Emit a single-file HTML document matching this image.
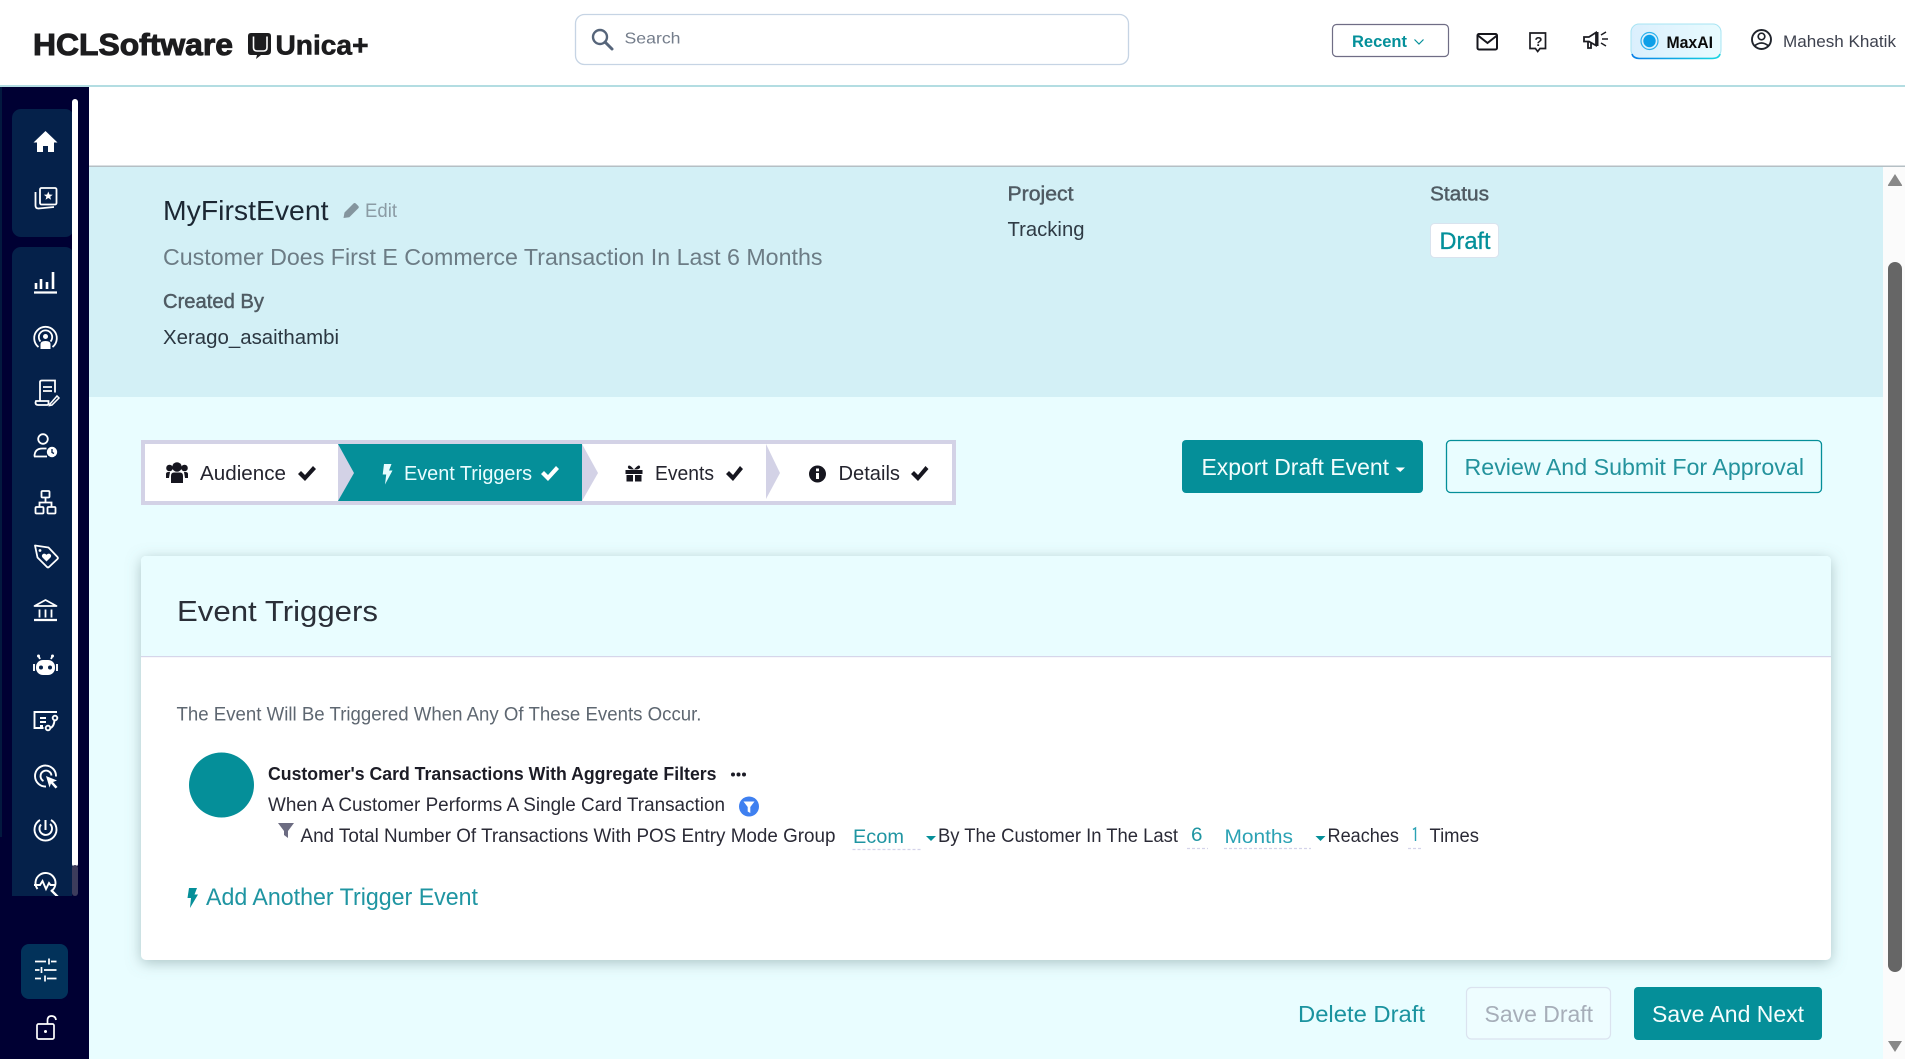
<!DOCTYPE html>
<html lang="en"><head><meta charset="utf-8"><title>MyFirstEvent</title>
<style>
html,body{margin:0;padding:0;width:1905px;height:1059px;overflow:hidden;background:#e9fdff}
svg{display:block}
text{font-family:"Liberation Sans",sans-serif;white-space:pre}
.b{font-weight:700}
</style></head><body>
<svg xmlns="http://www.w3.org/2000/svg" width="1905" height="1059" viewBox="0 0 1905 1059">
<defs>
<filter id="sh" x="-5%" y="-10%" width="110%" height="125%"><feDropShadow dx="0" dy="3" stdDeviation="7" flood-color="#6d8a8c" flood-opacity=".5"/></filter>
<linearGradient id="mx" x1="0" x2="1" y1="0" y2="0"><stop offset="0" stop-color="#dbeffd"/><stop offset="1" stop-color="#e8fbfe"/></linearGradient>
<linearGradient id="mb" x1="0" x2="1" y1="0" y2="0"><stop offset="0" stop-color="#0a7fe8"/><stop offset="1" stop-color="#16d6e0"/></linearGradient>
<clipPath id="navclip"><rect x="12" y="247" width="60" height="649"/></clipPath>
</defs>
<rect width="1905" height="1059" fill="#e9fdff"/>

<!-- header -->
<rect width="1905" height="85" fill="#fff"/>
<rect y="85" width="1905" height="2" fill="#b3dde2"/>
<text x="33" y="55" font-size="31" class="b" fill="#1c1c1e" stroke="#1c1c1e" stroke-width="1" textLength="200" lengthAdjust="spacingAndGlyphs">HCLSoftware</text>
<path d="M251 33h17q3 0 3 3v15q0 4-4 4h-6l-5 4 1-4h-6q-3 0-3-3V36q0-3 3-3z" fill="#1c1c1e"/>
<path d="M253.500 36.500v11q0 3.500 3.500 3.500h6.500q3.500 0 3.500-3.500v-11" fill="none" stroke="#fff" stroke-width="1.600"/>
<text x="275.500" y="54.500" font-size="28" class="b" fill="#1c1c1e" stroke="#1c1c1e" stroke-width=".6" textLength="93" lengthAdjust="spacingAndGlyphs">Unica+</text>
<rect x="575.500" y="14.500" width="553" height="50" rx="9" fill="#fff" stroke="#c6d4e4" stroke-width="1.300"/>
<circle cx="600" cy="37" r="7" fill="none" stroke="#56657a" stroke-width="2.400"/><path d="M605 42l7 7" stroke="#56657a" stroke-width="3" stroke-linecap="round"/>
<text x="624.500" y="43.500" font-size="16" fill="#747d8b" textLength="56" lengthAdjust="spacingAndGlyphs">Search</text>
<rect x="1332.500" y="24.500" width="116" height="32" rx="4" fill="#fff" stroke="#6f6d85" stroke-width="1.200"/>
<text x="1352" y="47" font-size="17" class="b" fill="#04909a" textLength="55" lengthAdjust="spacingAndGlyphs">Recent</text>
<path d="M1414.500 39.500l4.500 4.500 4.500-4.500" fill="none" stroke="#04909a" stroke-width="1.200"/>
<rect x="1477.500" y="34" width="19.500" height="15.500" rx="1.500" fill="none" stroke="#16161c" stroke-width="2"/><path d="M1478 35.500l9.500 7.500 9.500-7.500" fill="none" stroke="#16161c" stroke-width="2"/>
<path d="M1530 33h15.500v15.500h-5.500l-2.300 3-2.300-3H1530z" fill="none" stroke="#1c1c22" stroke-width="1.700"/>
<text x="1534.500" y="46" font-size="13" class="b" fill="#1c1c22">?</text>
<path d="M1584 37h5l7-4.500v13l-7-4h-5zM1588 42v6h3v-6" fill="none" stroke="#1c1c22" stroke-width="1.800"/><rect x="1596" y="32" width="2.500" height="14" fill="#1c1c22"/>
<path d="M1602 39h6M1601 35l5-3M1601 43l5 3" stroke="#1c1c22" stroke-width="1.500"/>
<rect x="1631" y="24" width="90" height="34" rx="8" fill="url(#mx)" stroke="#a7e4f3"/>
<path d="M1632 54q1 4 7 4.500h73q7 0 8-4.500" fill="none" stroke="url(#mb)" stroke-width="1.600"/>
<circle cx="1649.500" cy="41" r="8.500" fill="none" stroke="#2cb1ec" stroke-width="1.200"/><circle cx="1649.500" cy="41" r="6.200" fill="#0e9fe8"/>
<text x="1666.500" y="48" font-size="17" class="b" fill="#0a0a0a" textLength="46.500" lengthAdjust="spacingAndGlyphs">MaxAI</text>
<circle cx="1761.500" cy="39.500" r="9.500" fill="none" stroke="#20242c" stroke-width="1.900"/><circle cx="1761.500" cy="36.500" r="3.300" fill="none" stroke="#20242c" stroke-width="1.700"/><path d="M1754.500 46q7-6 14 0" fill="none" stroke="#20242c" stroke-width="1.800"/>
<text x="1783" y="47" font-size="16.500" fill="#3e424f" textLength="113" lengthAdjust="spacingAndGlyphs">Mahesh Khatik</text>

<!-- top blank -->
<rect x="89" y="87" width="1816" height="79" fill="#fff"/>
<rect x="89" y="165.500" width="1816" height="1.500" fill="#b5bfc4"/>

<!-- sidebar -->
<rect y="87" width="89" height="972" fill="#000033"/>
<rect y="87" width="2" height="750" fill="#03193f"/>
<rect x="12" y="109" width="62" height="128" rx="9" fill="#05214a"/>
<rect x="72" y="109" width="2" height="128" fill="#05214a"/>
<rect x="12" y="247" width="62" height="649" rx="9" fill="#05214a"/>
<rect x="12" y="270" width="60" height="626" fill="#05214a"/>
<rect x="72" y="99" width="6" height="768" rx="3" fill="#fff"/>
<rect x="72" y="865" width="6" height="31" rx="3" fill="#3c3c5c"/>

<g fill="none" stroke="#fff" stroke-width="1.800">
<path d="M45.500 131L33.500 142.500h3.500V152h6v-6h5v6h6v-9.500h3.500z" fill="#fff" stroke="none"/>
<rect x="40" y="188" width="16.500" height="16.500" rx="1.500"/><path d="M35.500 192v13.500q0 3 3 3L54 207" /><path d="M48.300 191.500l1.200 3 3.200.2-2.500 2 .9 3-2.800-1.700-2.800 1.700.9-3-2.500-2 3.200-.2z" fill="#fff" stroke="none"/>
<path d="M34 292.500h23" stroke-width="2.200"/><path d="M36 289v-6M41 289v-10M47 289v-7M53 289v-17" stroke-width="2.600"/>
<path d="M38.500 347a11.300 11.300 0 1 1 14 0" /><path d="M40.500 341.500a6.700 6.700 0 1 1 10 0"/><circle cx="45.500" cy="336.500" r="2.500" fill="#fff" stroke="none"/><path d="M40.500 349v-5q0-3 5-3t5 3v5z" fill="#fff" stroke="none"/>
<path d="M40 401v-19q0-1.500 2-1.500h13v12M36 401h12.500v2.500q0 1.500-1.500 1.500H38q-2.500 0-2.500-2.500z"/><path d="M43 387h9M43 391h9" /><path d="M50 404l7-8 2 2-7 7-2.500 .5z" stroke-width="1.500"/>
<circle cx="43" cy="439" r="4.800"/><path d="M34.500 456.500q0-8 8-8h4"/><path d="M34 456.500h13"/><circle cx="52" cy="452" r="5.200" fill="#fff" stroke="none"/><path d="M52 449v3.500l2 1" stroke="#05214a" stroke-width="1.300"/>
<rect x="41.500" y="491" width="8" height="6.500" rx="1"/><rect x="35.500" y="507" width="8" height="6.500" rx="1"/><rect x="47.500" y="507" width="8" height="6.500" rx="1"/><path d="M45.500 497.500v5M39.500 507v-4.500h12v4.500"/>
<path d="M35 545.500l13.500 2 9 9.500q.8 1 0 2l-8.500 8q-1 .8-2 0l-9.500-9.500z" stroke-linejoin="round"/><circle cx="40" cy="550.500" r="1.400" fill="#fff" stroke="none"/><path d="M46.500 561.500l-4-4q-1.500-2 .5-3.500 1.500-1 3.500 .8 2-1.800 3.500-.8 2 1.500 .5 3.500z" fill="#fff" stroke="none"/>
<path d="M34.500 606l11-6 11 6z" stroke-linejoin="round"/><path d="M34 620h23" stroke-width="2.200"/><path d="M39.500 609.500v8M45.500 609.500v8M51.500 609.500v8" stroke-width="1.800"/>
</g>
<g clip-path="url(#navclip)" fill="none" stroke="#fff" stroke-width="1.900">
<rect x="36" y="660" width="19" height="15" rx="7" fill="#fff" stroke="none"/><circle cx="41" cy="667.500" r="2" fill="#05214a" stroke="none"/><circle cx="50" cy="667.500" r="2" fill="#05214a" stroke="none"/><path d="M40 659l-1.500-3M51 659l1.500-3" /><circle cx="38.500" cy="656" r="1.500" fill="#fff" stroke="none"/><circle cx="52.500" cy="656" r="1.500" fill="#fff" stroke="none"/><path d="M34 664v7M57 664v7" />
<path d="M57 712h-22.500v16h9M40 718h6M40 722h6M40 726h3"/><circle cx="55" cy="718" r="2.300"/><circle cx="48" cy="728" r="2.300"/><path d="M50 728q4-1 4.500-8"/>
<path d="M46 786.500a10.500 10.500 0 1 1 10-10M43.500 781a5.500 5.500 0 1 1 8-5.500"/><path d="M46 776l11 4.500-4 1.500 4.500 5-2 1.500-4.500-5-1.500 4z" fill="#fff" stroke="none"/>
<path d="M40 820a11 11 0 1 0 11 0M50 824a6.300 6.300 0 1 1-9 .5"/><path d="M45.500 820v10" stroke-width="2"/>
<path d="M37.500 889a10 10 0 1 1 14 2M34 885h6l2.500-4 3.500 8 3-6 1.500 2h4"/><path d="M51 890l7 7" stroke-width="2.300"/>
</g>
<rect x="21" y="944" width="47" height="55" rx="8" fill="#02325a"/>
<g fill="none" stroke="#fff" stroke-width="1.700">
<path d="M35 961.500h11M51 961.500h5.500M49 958.500v6M35 970h4.500M44 970h12.500M41.500 967v6M35 978.500h6M47 978.500h9.500M45 975.500v6"/>
<rect x="37" y="1024" width="17" height="15" rx="1.500"/><path d="M47.500 1024v-3.500q0-4.500 4-4.500t4.500 4"/><circle cx="45.500" cy="1031.500" r="1.500" fill="#fff" stroke="none"/>
</g>

<!-- hero panel -->
<rect x="89" y="167" width="1794" height="230" fill="#d3f0f6"/>
<text x="163" y="220" font-size="28" fill="#1b2733" textLength="165.500" lengthAdjust="spacingAndGlyphs">MyFirstEvent</text>
<path d="M343.500 218l1-5.500 9-9q1-1 2.300 0l2.500 2.500q1 1.200 0 2.300l-9 9z" fill="#84959e"/>
<text x="365" y="217" font-size="19" fill="#8b9ba4" textLength="32" lengthAdjust="spacingAndGlyphs">Edit</text>
<text x="163" y="265" font-size="23" fill="#6c7c85" textLength="659.500" lengthAdjust="spacingAndGlyphs">Customer Does First E Commerce Transaction In Last 6 Months</text>
<text x="163" y="308" font-size="20" fill="#4f5b63" stroke="#4f5b63" stroke-width=".45" textLength="101" lengthAdjust="spacingAndGlyphs">Created By</text>
<text x="163" y="344" font-size="20" fill="#2b3741" textLength="176" lengthAdjust="spacingAndGlyphs">Xerago_asaithambi</text>
<text x="1007.500" y="200.500" font-size="20" fill="#4f5b63" stroke="#4f5b63" stroke-width=".45" textLength="66" lengthAdjust="spacingAndGlyphs">Project</text>
<text x="1007.500" y="236" font-size="20" fill="#2f3b45" textLength="77" lengthAdjust="spacingAndGlyphs">Tracking</text>
<text x="1430" y="200.500" font-size="20" fill="#4f5b63" stroke="#4f5b63" stroke-width=".45" textLength="59" lengthAdjust="spacingAndGlyphs">Status</text>
<rect x="1430.500" y="223.500" width="68" height="34" rx="4" fill="#fff" stroke="#d9e3ee"/>
<text x="1439.500" y="249" font-size="24" fill="#04909a" stroke="#04909a" stroke-width=".3" textLength="51" lengthAdjust="spacingAndGlyphs">Draft</text>

<!-- steps -->
<rect x="141" y="440" width="815" height="65" fill="#d3d2e6"/>
<rect x="145" y="444" width="807" height="57" fill="#fff"/>
<rect x="338" y="444" width="244" height="57" fill="#058f99"/>
<path d="M338 444l16 29-16 28z" fill="#d3d2e6"/>
<path d="M582 444l16 29-16 28z" fill="#d3d2e6"/>
<path d="M766 444l14 29-14 26z" fill="#d3d2e6"/>
<g fill="#16161f">
<circle cx="177" cy="467" r="4.800"/><circle cx="169.500" cy="468" r="3.300"/><circle cx="184.500" cy="468" r="3.300"/>
<path d="M171 483v-7q0-3.500 3-3.500h6q3 0 3 3.500v7zM166 478v-4q0-2 2.500-2H170l-1 6zM188 478v-4q0-2-2.500-2H184l1 6z"/>
<path d="M298 474l3-3 4 4 8-9 3 3-11 12z"/>
<rect x="625.500" y="470" width="17" height="4"/><rect x="626.500" y="475" width="6.500" height="6.500"/><rect x="635" y="475" width="6.500" height="6.500"/>
<path d="M634 469.500q-7 0-6-3t6 3q5-6 6-3t-6 3z"/>
<path d="M726 474l3-3 4 4 7-9 3 3-10 12z"/>
<path d="M911 474l3-3 4 4 7.500-9 3 3-10.500 12z"/>
</g>
<circle cx="817.500" cy="474" r="8.500" fill="#16161f"/><rect x="816" y="473" width="3" height="6" fill="#fff"/><rect x="816" y="468.500" width="3" height="2.800" fill="#fff"/>
<path d="M384 464h7.500l-2.500 6.500h3.500l-7.500 14 1.200-10h-3.500z" fill="#e6fdff"/>
<path d="M541 474l3-3 4 4 8-9 3 3-11 12z" fill="#fff"/>
<text x="200" y="480" font-size="20" fill="#24242e" textLength="86" lengthAdjust="spacingAndGlyphs">Audience</text>
<text x="404" y="480" font-size="20" fill="#eafdff" textLength="128" lengthAdjust="spacingAndGlyphs">Event Triggers</text>
<text x="655" y="480" font-size="20" fill="#24242e" textLength="59" lengthAdjust="spacingAndGlyphs">Events</text>
<text x="838.500" y="480" font-size="20" fill="#24242e" textLength="61.500" lengthAdjust="spacingAndGlyphs">Details</text>

<rect x="1182" y="440" width="241" height="53" rx="4" fill="#058f99"/>
<text x="1201.500" y="475" font-size="23" fill="#f2fdfd" textLength="187.500" lengthAdjust="spacingAndGlyphs">Export Draft Event</text>
<path d="M1395.500 467.500h9.500l-4.800 4.500z" fill="#fff"/>
<rect x="1446.500" y="440.500" width="375" height="52" rx="4" fill="none" stroke="#058f99" stroke-width="1.300"/>
<text x="1464.500" y="475" font-size="23" fill="#24939d" textLength="339.500" lengthAdjust="spacingAndGlyphs">Review And Submit For Approval</text>

<!-- card -->
<rect x="141" y="556" width="1690" height="404" rx="5" fill="#fff" filter="url(#sh)"/>
<path d="M141 656v-95q0-5 5-5h1680q5 0 5 5v95z" fill="#e9fdff"/>
<rect x="141" y="656" width="1690" height="1.200" fill="#d6d6ea"/>
<text x="177" y="621" font-size="29" fill="#2a2f38" textLength="201" lengthAdjust="spacingAndGlyphs">Event Triggers</text>
<text x="176.500" y="720.500" font-size="19" fill="#5e6771" textLength="525" lengthAdjust="spacingAndGlyphs">The Event Will Be Triggered When Any Of These Events Occur.</text>
<circle cx="221.500" cy="785" r="32.500" fill="#058f99"/>
<text x="268" y="780" font-size="18.500" class="b" fill="#1c1c26" textLength="448.500" lengthAdjust="spacingAndGlyphs">Customer's Card Transactions With Aggregate Filters</text>
<circle cx="733" cy="774.500" r="2" fill="#1c1c26"/><circle cx="738.500" cy="774.500" r="2" fill="#1c1c26"/><circle cx="744" cy="774.500" r="2" fill="#1c1c26"/>
<text x="268" y="811" font-size="19" fill="#2a2a36" textLength="457" lengthAdjust="spacingAndGlyphs">When A Customer Performs A Single Card Transaction</text>
<circle cx="749" cy="806.500" r="10" fill="#3f80f0"/><path d="M743.500 801.500h11l-4.200 5.500v6l-2.600-1.500v-4.500z" fill="#fff"/>
<path d="M278 823h16l-6 8v7l-4-3v-4z" fill="#6c6c82"/>
<text x="300.500" y="842" font-size="19" fill="#2a2a36" textLength="535" lengthAdjust="spacingAndGlyphs">And Total Number Of Transactions With POS Entry Mode Group</text>
<text x="853" y="843" font-size="19.500" fill="#1f95a2" textLength="51" lengthAdjust="spacingAndGlyphs">Ecom</text>
<path d="M852.500 849.500H922M1187 848.500h21M1224 848.500h87M1408 848.500h14" stroke="#d4d3ea" stroke-width="1.200" stroke-dasharray="3 2"/>
<path d="M926 836h10l-5 5z" fill="#058f99"/><path d="M1315.500 836h10l-5 5z" fill="#058f99"/>
<text x="938" y="842" font-size="19" fill="#2a2a36" textLength="240" lengthAdjust="spacingAndGlyphs">By The Customer In The Last</text>
<text x="1191" y="841" font-size="19.500" fill="#1f95a2" textLength="11.500" lengthAdjust="spacingAndGlyphs">6</text>
<text x="1224.500" y="843" font-size="19.500" fill="#2ba2b4" textLength="68.500" lengthAdjust="spacingAndGlyphs">Months</text>
<text x="1327.500" y="842" font-size="19" fill="#2a2a36" textLength="71.500" lengthAdjust="spacingAndGlyphs">Reaches</text>
<path d="M1413 829.500l2.500-1.500V841" stroke="#2ba2b4" stroke-width="1.400" fill="none"/>
<text x="1429.500" y="842" font-size="19" fill="#2a2a36" textLength="49.500" lengthAdjust="spacingAndGlyphs">Times</text>
<path d="M189 888h8l-2.500 6.500h3.500L190 908l1-10h-3.500z" fill="#058f99"/>
<text x="206" y="905" font-size="24" fill="#1f95a2" textLength="272" lengthAdjust="spacingAndGlyphs">Add Another Trigger Event</text>

<!-- footer buttons -->
<text x="1298" y="1022" font-size="23" fill="#1a939f" textLength="127" lengthAdjust="spacingAndGlyphs">Delete Draft</text>
<rect x="1466.500" y="987.500" width="144" height="51.500" rx="5" fill="#eefdff" stroke="#dbe3ef" stroke-width="1.200"/>
<text x="1484.500" y="1022" font-size="23" fill="#a6aeb9" textLength="108.500" lengthAdjust="spacingAndGlyphs">Save Draft</text>
<rect x="1634" y="987" width="188" height="53" rx="4" fill="#058f99"/>
<text x="1652" y="1022" font-size="23" fill="#f4fdfd" textLength="152" lengthAdjust="spacingAndGlyphs">Save And Next</text>

<!-- scrollbar -->
<rect x="1883" y="167" width="22" height="892" fill="#fbfbfb"/>
<path d="M1888 185l7-11 7 11q.5 1-1 1h-12q-1.500 0-1-1z" fill="#888"/>
<rect x="1888" y="262" width="14" height="710" rx="7" fill="#666"/>
<path d="M1888 1041h14l-7 11z" fill="#888"/>
</svg>
</body></html>
